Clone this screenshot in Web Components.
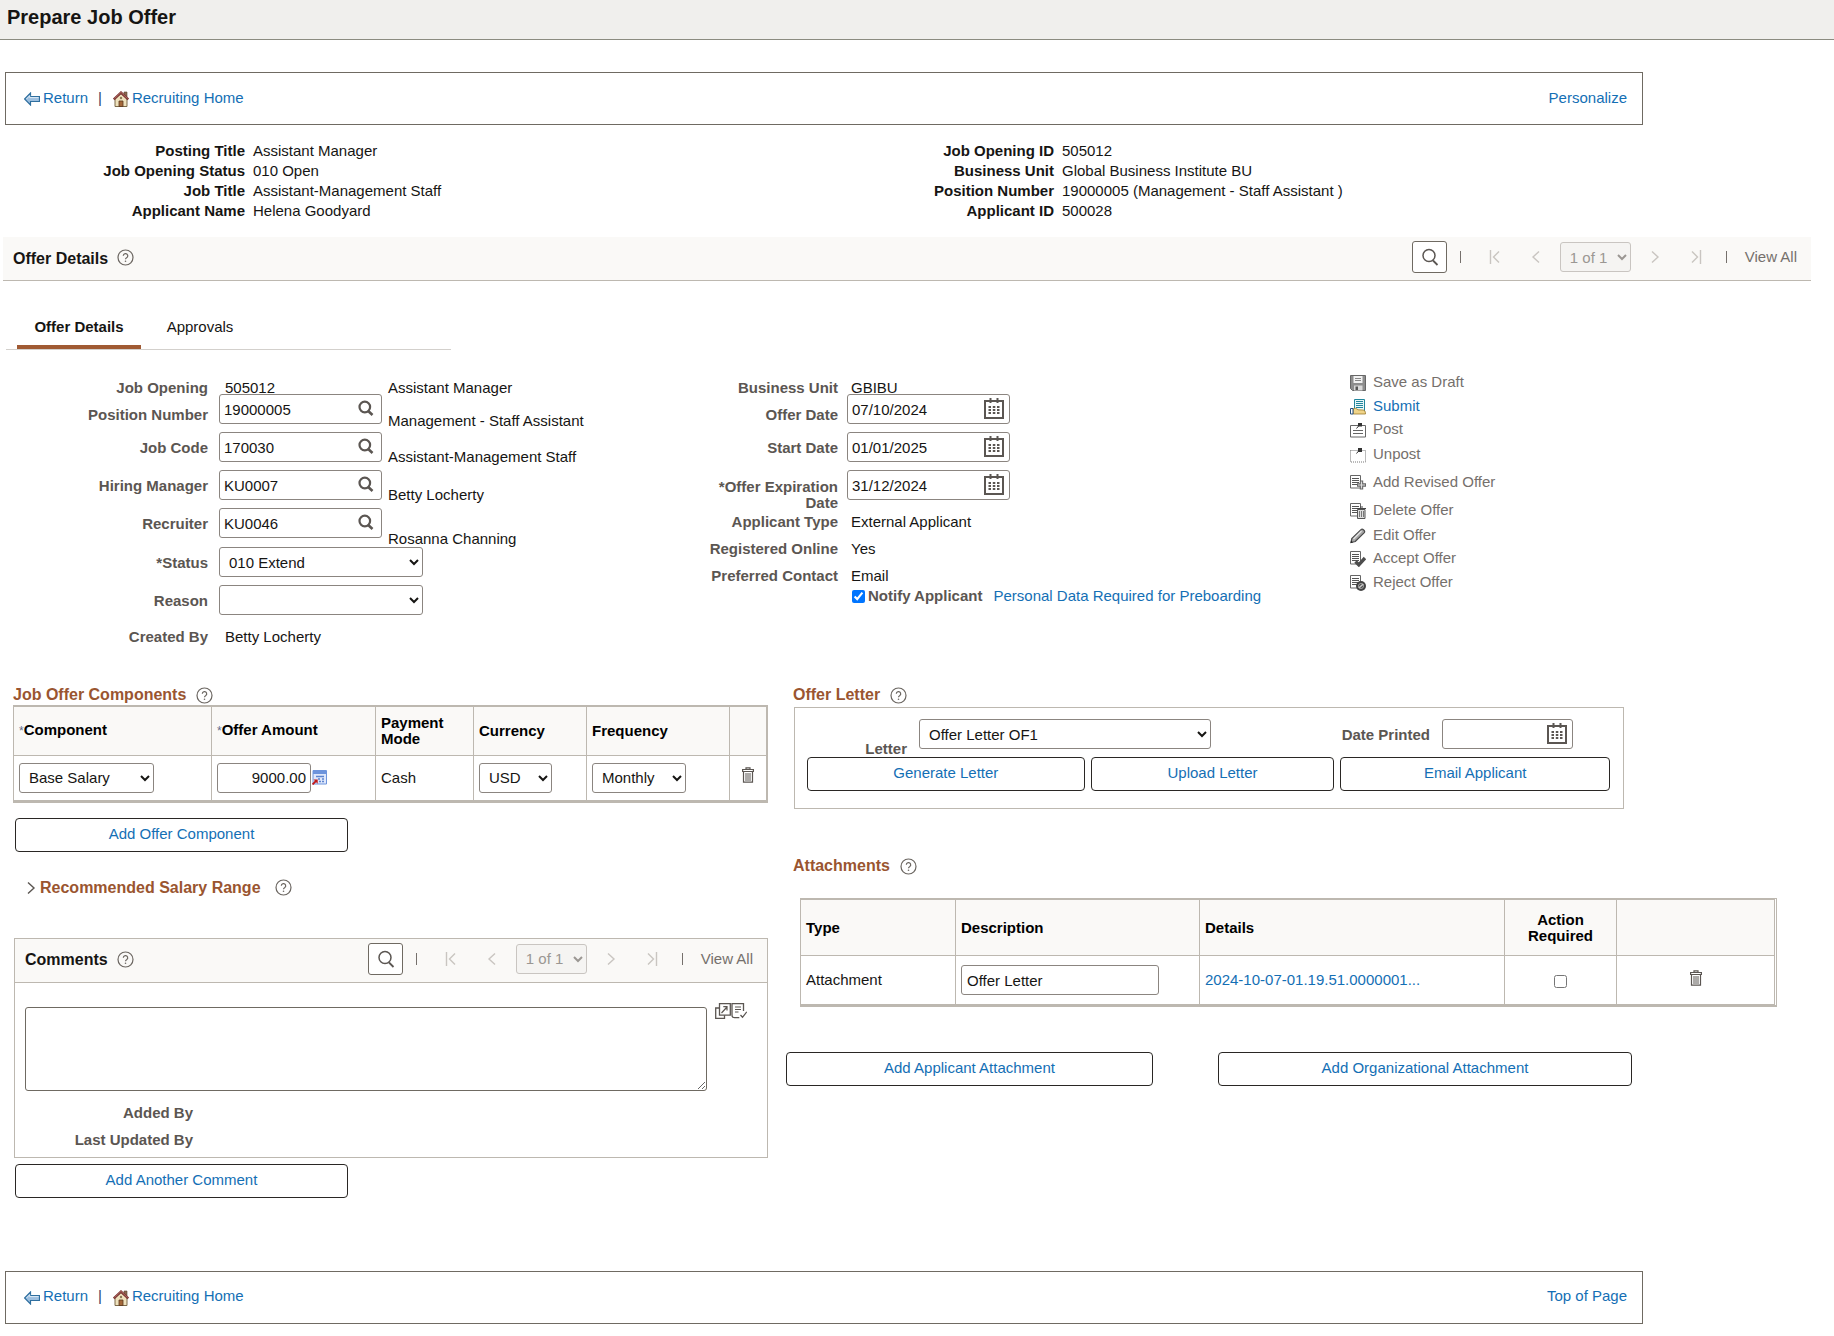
<!DOCTYPE html>
<html lang="en">
<head>
<meta charset="utf-8">
<title>Prepare Job Offer</title>
<style>
  html, body { margin: 0; background: #fff; }
  body { font-family: "Liberation Sans", Arial, sans-serif; font-size: 15px; line-height: 20px; color: #161513; }
</style>
</head>
<body>
<job-offer-page></job-offer-page>
<script>
const BASE = `
  *, *::before, *::after { box-sizing: border-box; }
  :host { display: block; }
  :host([hidden]) { display: none; }
  h1, h2, h3, p, dl, dd, ul { margin: 0; padding: 0; }
  a { color: #146fb5; text-decoration: none; }
  button, input, select, textarea { font: inherit; color: inherit; margin: 0; }
  button { background: none; border: 0; padding: 0; cursor: pointer; display: inline-flex; align-items: center; justify-content: center; }
  input:not([type=checkbox]), select, textarea { background: #fff; border: 1px solid #8b8580; border-radius: 3px; }
  select { height: 30px; padding: 0 5px; color: #161513; }
  input.text { height: 30px; padding: 0 5px; }
  input[type=checkbox] { width: 13px; height: 13px; }
  .lbl { font-weight: 700; color: #5b5652; }
  h3 { font-size: 16px; line-height: 20px; color: #9a5530; }
  .field { display: inline-flex; align-items: center; height: 30px; border: 1px solid #8b8580; border-radius: 3px; background: #fff; padding: 0 4px; }
  .field button { padding: 0 1px 2px 0; }
  .field input:not([type=checkbox]) { border: 0; padding: 0; min-width: 0; width: 0; flex: 1; height: 26px; background: transparent; outline: 0; }
`;
function define(name, css, html, setup) {
  const tpl = document.createElement('template');
  tpl.innerHTML = `<style>${BASE}${css}</style>${html}`;
  customElements.define(name, class extends HTMLElement {
    connectedCallback() {
      if (this.shadowRoot) return;
      this.attachShadow({ mode: 'open' }).append(tpl.content.cloneNode(true));
      if (setup) setup(this, this.shadowRoot);
    }
  });
}

/* ---------- icons ---------- */
const DOC = '<path d="M.5.5h10v12.500H.5z" fill="#fff" stroke="#666"/><path d="M2 3.500h7M2 5.500h7M2 7.500h7M2 9.500h7" stroke="#555"/>';
const ICONS = {
  back: [16, 14, '<path d="M.6 7 6.5 1v3.500h9v5h-9V13L.6 7z" fill="#9dbfdf" stroke="#2f6f9f" stroke-width="1.200"/><path d="M2.500 7l3.200-3.300v1.900h8.800" fill="none" stroke="#dceaf6"/>'],
  home: [16, 16, '<path d="M11 1h3v5h-3z" fill="#8a6a50" stroke="#5c4534" stroke-width=".6"/><path d="M2 7.500 8 2.5l6 5V15.500H2z" fill="#efe2bd" stroke="#7c6a4a"/><path d="M.8 8.500 8 1.600l7.200 6.900" fill="none" stroke="#7c3634" stroke-width="2.400"/><path d="M1.500 7.500 8 1.300l6.500 6.200" fill="none" stroke="#c07a70" stroke-width=".7"/><path d="M6 15.500V10h4v5.500z" fill="#a5683a" stroke="#5b3a20" stroke-width=".8"/><circle cx="8" cy="7" r="1.200" fill="#8b7a5a"/>'],
  help: [17, 17, '<circle cx="8.500" cy="8.500" r="7.500" fill="none" stroke="#6b6661" stroke-width="1.200"/><path d="M6.300 6.800a2.200 2.200 0 1 1 3.300 1.900c-.7.400-1.100.7-1.100 1.500" fill="none" stroke="#6b6661" stroke-width="1.200"/><circle cx="8.500" cy="12.200" r=".8" fill="#6b6661"/>'],
  search: [16, 16, '<circle cx="6.800" cy="7" r="5.300" fill="none" stroke="#5b5652" stroke-width="2.200"/><path d="m10.200 11 4.300 4" stroke="#5b5652" stroke-width="2.600"/>'],
  find: [18, 18, '<circle cx="8" cy="7.500" r="6" fill="none" stroke="#5b5652" stroke-width="1.500"/><path d="m12 12.500 4.500 4.500" stroke="#5b5652" stroke-width="1.800"/>'],
  cal: [20, 22, '<path d="M1 4h18v17H1z" fill="none" stroke="#5b5652" stroke-width="2"/><path d="M6.500 1v5M13.500 1v5" stroke="#5b5652" stroke-width="2"/><path d="M4.500 10h2.500M8.800 10h2.500M13 10h2.500M4.500 13h2.500M8.800 13h2.500M13 13h2.500M4.500 16h2.500M8.800 16h2.500M13 16h2.500" stroke="#5b5652" stroke-width="1.800"/>'],
  first: [12, 14, '<path d="M1.500 0v14M10 1.500 4.500 7l5.500 5.500" fill="none" stroke="#c9c5c1" stroke-width="1.400"/>'],
  prev: [12, 14, '<path d="M9 1.500 3 7l6 5.500" fill="none" stroke="#c9c5c1" stroke-width="1.400"/>'],
  next: [12, 14, '<path d="M3 1.500 9 7l-6 5.500" fill="none" stroke="#c9c5c1" stroke-width="1.400"/>'],
  last: [12, 14, '<path d="M10.500 0v14M2 1.500 7.500 7 2 12.500" fill="none" stroke="#c9c5c1" stroke-width="1.400"/>'],
  expand: [9, 14, '<path d="m1 1.500 6 5.500-6 5.500" fill="none" stroke="#5b5652" stroke-width="1.400"/>'],
  trash: [12, 16, '<path d="M4 2V.8h4V2M.6 2.500h10.800v2H.6zM1.500 4.500h9v10.700h-9z" fill="none" stroke="#5b5652" stroke-width="1.200"/><path d="M4 6v8M6 6v8M8 6v8" stroke="#5b5652"/>'],
  convert: [15, 15, '<path d="M1 .5h13.500v13.500H1z" fill="#dfe8fb" stroke="#6d94dc"/><path d="M1 1h13v3H1z" fill="#6d94dc"/><path d="M4 6.500h8M6 9h2M10 9h2M7 11.500h2M10 11.500h2" stroke="#5d84cf" stroke-width="1.400"/><path d="M.5 14.500 4.500 10.500" stroke="#c01818" stroke-width="1.800"/><path d="M1.500 9.500h4.200v4.200z" fill="#c01818"/>'],
  save: [16, 16, '<path d="M.5.5h15v15h-13l-2-2z" fill="#8d8d8d" stroke="#666"/><path d="M3.500 1h9v7h-9z" fill="#f2f2f2"/><path d="M5 3.500h6M5 5.500h6" stroke="#888"/><path d="M4 10.500h8.500v5H4z" fill="#d9d9d9"/><path d="M5.500 11.500h2.500v3.500H5.500z" fill="#555"/>'],
  submit: [16, 16, '<path d="M4.500.5h10v12h-10z" fill="#e9f7fa" stroke="#23869c"/><path d="M6 2.500h7M6 4.500h7M6 6.500h7M6 8.500h7" stroke="#23869c"/><path d="M3 10c2-1.500 3.500-.5 5 .8l5 .2c1.500.1 2.500 1 2.500 4H3z" fill="#f0d489" stroke="#9a7a2c" stroke-width=".8"/><path d="M.5 9.500h2.500v5.500H.5z" fill="#fff" stroke="#27507f"/>'],
  post: [16, 16, '<path d="M.5 3.500h15v11.500H.5z" fill="#fff" stroke="#666"/><path d="M3 8.500h10M3 11.500h10" stroke="#666"/><path d="m6.500 6.500 2.500-3" stroke="#333"/><path d="M8 1h4v3.500H8z" fill="#333"/>'],
  unpost: [16, 16, '<path d="M.5 3.500h15v11.500H.5z" fill="none" stroke="#777" stroke-dasharray="1 1"/><path d="m6.500 6.500 2.500-3" stroke="#333"/><path d="M8 1h4v4H8z" fill="#333"/>'],
  add: [16, 16, DOC + '<path d="M11.500 5.500v9M7 10h9" stroke="#666" stroke-width="3.400"/><path d="M11.500 6.500v7M8 10h7" stroke="#ddd" stroke-width="1.200"/>'],
  del: [16, 16, DOC + '<path d="M7.500 6.500h7.500v9H7.500z" fill="#ddd" stroke="#555"/><path d="M6.500 5.500h9.500M10 4h3" stroke="#444"/><path d="M9.500 8v6M11.500 8v6M13.500 8v6" stroke="#777"/>'],
  edit: [16, 16, '<path d="m1 14.500.8-4L11 1.600c1.500-1.300 4.600 1.300 3.300 3L5.300 13.500z" fill="#a5a5a5" stroke="#4a4a4a" stroke-width="1.200"/><path d="m3.500 11 8-8" stroke="#e2e2e2" stroke-width="1.400"/><path d="M.6 15l.4-2.500 2 2z" fill="#222"/>'],
  accept: [16, 16, DOC + '<path d="m5.500 10.500 3.300 3.300L15 7" fill="none" stroke="#4d4d4d" stroke-width="3.400"/>'],
  reject: [16, 16, DOC + '<circle cx="11" cy="11" r="5" fill="#444"/><path d="m8.800 13 4.500-4" stroke="#ccc" stroke-width="1.600"/><circle cx="11" cy="11" r="2.500" fill="none" stroke="#bbb" stroke-width=".8"/>'],
  popup: [16, 16, '<path d="M4.500.7h10.800v11.500H4.500z" fill="none" stroke="#5b5652" stroke-width="1.300"/><path d="M4.500 5H.7v10.300h8.800v-3" fill="none" stroke="#5b5652" stroke-width="1.300"/><path d="m6.500 10 5.500-6M8.300 3.700H12v3.800" fill="none" stroke="#5b5652" stroke-width="1.200"/>'],
  spell: [16, 16, '<path d="M12.500 8V.7H1v11.500c0 2 1 2.500 2.500 2.500h4.800" fill="none" stroke="#5b5652" stroke-width="1.300"/><path d="M4 4h6M4 6.500h6M4 9h3.500" stroke="#5b5652" stroke-width="1.200"/><path d="m9.500 12 2 2.300 4.300-5.500" fill="none" stroke="#5b5652" stroke-width="1.300"/>']
};
define('pt-icon', ':host{display:inline-flex;flex:none} svg{display:block}', '<span></span>', (el, root) => {
  const [w, h, body] = ICONS[el.getAttribute('name')];
  root.querySelector('span').innerHTML = `<svg width="${w}" height="${h}" viewBox="0 0 ${w} ${h}" aria-hidden="true">${body}</svg>`;
});

/* ---------- shared parts ---------- */
define('pt-help', ':host{display:inline-flex}', '<button type="button" aria-label="Help"><pt-icon name="help"></pt-icon></button>');

define('pt-button', `
  button { width: 100%; height: 34px; padding-bottom: 2px; border: 1px solid #2a2724; border-radius: 4px; background: #fff; color: #146fb5; }
`, '<button type="button"><slot></slot></button>');

define('pt-header', `
  :host { background: #f0efed; border-bottom: 1px solid #8b8b80; }
  h1 { font-size: 20px; line-height: 24px; padding: 5px 7px 10px; }
`, '<h1><slot></slot></h1>');

define('pt-nav-box', `
  nav { display: flex; align-items: center; height: 53px; padding: 0 15px 2px 18px; border: 1px solid #6f6a62; }
  .end { margin-left: auto; }
  a { display: inline-flex; align-items: center; gap: 3px; }
  pt-icon { padding-top: 3px; }
  .sep { padding: 0 11px 0 10px; color: #2b3b66; }
`, `<nav>
    <a href="#return"><pt-icon name="back"></pt-icon>Return</a>
    <span class="sep">|</span>
    <a href="#home"><pt-icon name="home"></pt-icon>Recruiting Home</a>
    <span class="end"><slot></slot></span>
  </nav>`);

define('pt-pager', `
  :host { display: flex; align-items: center; color: #75706c; }
  .find { width: 35px; height: 32px; border: 1px solid #6f6a62; border-radius: 3px; background: #fff; }
  .bar { width: 1px; height: 12px; background: #75706c; }
  .group { display: flex; align-items: center; flex: 1; justify-content: space-between; padding: 0 24px 0 28px; }
  .pair { display: flex; gap: 29px; }
  .find + .bar { margin-left: 13px; }
  .all { margin-left: 18px; color: #75706c; }
  select { width: 71px; background: #f5f4f2; border-color: #c9c5c1; color: #9b9793; opacity: 1; }
`, `<button class="find" type="button" aria-label="Find"><pt-icon name="find"></pt-icon></button>
    <span class="bar"></span>
    <div class="group">
      <span class="pair"><button type="button" aria-label="First"><pt-icon name="first"></pt-icon></button>
      <button type="button" aria-label="Previous"><pt-icon name="prev"></pt-icon></button></span>
      <select aria-label="Row" disabled><option>1 of 1</option></select>
      <span class="pair"><button type="button" aria-label="Next"><pt-icon name="next"></pt-icon></button>
      <button type="button" aria-label="Last"><pt-icon name="last"></pt-icon></button></span>
    </div>
    <span class="bar"></span>
    <a class="all" href="#all">View All</a>`);

define('pt-section-bar', `
  :host { display: flex; align-items: center; height: 44px; padding: 0 14px 0 10px; background: #faf9f7; border-bottom: 1px solid #bdb8b0; }
  h2 { font-size: 16px; line-height: 20px; }
  pt-help { margin-left: 9px; padding-bottom: 2px; }
  pt-pager { margin-left: auto; width: 385px; padding-bottom: 3px; }
`, '<h2><slot></slot></h2><pt-help></pt-help><pt-pager></pt-pager>');

define('pt-facts', `
  :host { display: grid; grid-template-columns: 1fr 1fr; }
  dl { display: grid; grid-template-columns: 245px 1fr; column-gap: 8px; }
  dl + dl { grid-template-columns: 137px 1fr; }
  dt { font-weight: 700; text-align: right; white-space: nowrap; }
`, `<dl>
      <dt>Posting Title</dt><dd>Assistant Manager</dd>
      <dt>Job Opening Status</dt><dd>010 Open</dd>
      <dt>Job Title</dt><dd>Assistant-Management Staff</dd>
      <dt>Applicant Name</dt><dd>Helena Goodyard</dd>
    </dl>
    <dl>
      <dt>Job Opening ID</dt><dd>505012</dd>
      <dt>Business Unit</dt><dd>Global Business Institute BU</dd>
      <dt>Position Number</dt><dd>19000005 (Management - Staff Assistant )</dd>
      <dt>Applicant ID</dt><dd>500028</dd>
    </dl>`);

define('pt-tabs', `
  :host { width: 445px; border-bottom: 1px solid #d3d0cc; }
  div { display: flex; padding-left: 11px; }
  button { height: 45px; width: 118px; padding-top: 4px; border-bottom: 4px solid transparent; }
  button.on { width: 124px; font-weight: 700; border-color: #a05a33; }
`, `<div role="tablist"><button class="on" role="tab" type="button" aria-selected="true">Offer Details</button><button role="tab" type="button">Approvals</button></div>`);

/* ---------- offer form ---------- */
define('offer-form', `
  :host { display: flex; padding-top: 8px; }
  .main { width: 614px; flex: none; }
  .dates { flex: 1; }
  .row { display: grid; height: 38px; align-items: start; }
  .main .row { grid-template-columns: 205px 163px 1fr; }
  .main .row > * { min-width: 0; }
  .dates .row { grid-template-columns: 221px 1fr; }
  .row.top { height: 16px; }
  .row.fact { height: 27px; line-height: 27px; }
  .row.tick, .row.tick .lbl { height: 14px; line-height: 14px; }
  .lbl { text-align: right; }
  .field-row > .lbl { line-height: 32px; }
  .field-row.low > .lbl { padding-top: 11px; line-height: 20px; }
  .field-row.two > .lbl { padding: 9px 0 0 80px; line-height: 16px; }
  .ctl { margin-left: 11px; }
  .val { padding-left: 17px; }
  .dates .ctl { margin-left: 9px; }
  .dates .val { padding-left: 13px; }
  .field { width: 163px; }
  .main .field button { padding-right: 3px; }
  .field-row select { width: 204px; }
  .desc { padding-left: 17px; white-space: nowrap; }
  .field-row .desc { padding-top: 15px; }
  .field-row.low .desc { padding-top: 17px; }
  .field-row.sunk { height: 39px; }
  .field-row.sunk .desc { padding-top: 21px; }
  .tick .ctl { display: flex; align-items: center; padding-left: 5px; }
  .tick input { margin-right: 3px; }
  .tick a { margin-left: 11px; }
`, `<div class="main">
      <div class="row top"><span class="lbl">Job Opening</span><span class="val">505012</span><span class="desc">Assistant Manager</span></div>
      <div class="row field-row low"><label class="lbl" for="pn">Position Number</label><span class="ctl field"><input id="pn" value="19000005"><button type="button" aria-label="Look up"><pt-icon name="search"></pt-icon></button></span><span class="desc">Management - Staff Assistant</span></div>
      <div class="row field-row"><label class="lbl" for="jc">Job Code</label><span class="ctl field"><input id="jc" value="170030"><button type="button" aria-label="Look up"><pt-icon name="search"></pt-icon></button></span><span class="desc">Assistant-Management Staff</span></div>
      <div class="row field-row"><label class="lbl" for="hm">Hiring Manager</label><span class="ctl field"><input id="hm" value="KU0007"><button type="button" aria-label="Look up"><pt-icon name="search"></pt-icon></button></span><span class="desc">Betty Locherty</span></div>
      <div class="row field-row sunk"><label class="lbl" for="rc">Recruiter</label><span class="ctl field"><input id="rc" value="KU0046"><button type="button" aria-label="Look up"><pt-icon name="search"></pt-icon></button></span><span class="desc">Rosanna Channing</span></div>
      <div class="row field-row"><label class="lbl" for="st">*Status</label><select class="ctl" id="st"><option>010 Extend</option></select></div>
      <div class="row field-row"><label class="lbl" for="rs">Reason</label><select class="ctl" id="rs"><option></option></select></div>
      <div class="row fact"><span class="lbl">Created By</span><span class="val">Betty Locherty</span></div>
    </div>
    <div class="dates">
      <div class="row top"><span class="lbl">Business Unit</span><span class="val">GBIBU</span></div>
      <div class="row field-row low"><label class="lbl" for="od">Offer Date</label><span class="ctl field"><input id="od" value="07/10/2024"><button type="button" aria-label="Calendar"><pt-icon name="cal"></pt-icon></button></span></div>
      <div class="row field-row"><label class="lbl" for="sd">Start Date</label><span class="ctl field"><input id="sd" value="01/01/2025"><button type="button" aria-label="Calendar"><pt-icon name="cal"></pt-icon></button></span></div>
      <div class="row field-row two"><label class="lbl" for="ed">*Offer Expiration Date</label><span class="ctl field"><input id="ed" value="31/12/2024"><button type="button" aria-label="Calendar"><pt-icon name="cal"></pt-icon></button></span></div>
      <div class="row fact"><span class="lbl">Applicant Type</span><span class="val">External Applicant</span></div>
      <div class="row fact"><span class="lbl">Registered Online</span><span class="val">Yes</span></div>
      <div class="row fact"><span class="lbl">Preferred Contact</span><span class="val">Email</span></div>
      <div class="row tick"><span></span><span class="ctl"><input type="checkbox" id="na" checked><label class="lbl" for="na">Notify Applicant</label><a href="#personal-data">Personal Data Required for Preboarding</a></span></div>
    </div>`);

define('offer-action', `
  :host { display: flex; height: 24px; }
  :host([fit=tight]) { height: 22px; }
  :host([fit=loose]) { height: 28px; }
  button { gap: 7px; color: #75706c; }
  :host([active]) button { color: #146fb5; }
  pt-icon { padding-top: 2px; }
`, '<button type="button"><span></span><slot></slot></button>', (el, root) => {
  const icon = document.createElement('pt-icon');
  icon.setAttribute('name', el.getAttribute('icon'));
  root.querySelector('span').replaceWith(icon);
});

define('offer-actions', '', `
  <offer-action icon="save">Save as Draft</offer-action>
  <offer-action icon="submit" active>Submit</offer-action>
  <offer-action icon="post" fit="tight">Post</offer-action>
  <offer-action icon="unpost" fit="loose">Unpost</offer-action>
  <offer-action icon="add" fit="loose">Add Revised Offer</offer-action>
  <offer-action icon="del" fit="loose">Delete Offer</offer-action>
  <offer-action icon="edit" fit="tight">Edit Offer</offer-action>
  <offer-action icon="accept">Accept Offer</offer-action>
  <offer-action icon="reject">Reject Offer</offer-action>`);

/* ---------- tables ---------- */
const TABLE = `
  table { width: 100%; border-collapse: collapse; table-layout: fixed; border: 1px solid #bdb8b0; border-width: 2px 2px 3px 1px; }
  th, td { border: 1px solid #bdb8b0; padding: 0 5px; text-align: left; }
  th { background: #faf9f7; color: #000; line-height: 16px; }
  td > * { vertical-align: middle; }
  td > button { padding-bottom: 5px; }
  .mid { text-align: center; }
`;
define('job-components', TABLE + `
  th { height: 49px; } td { height: 46px; }
  .head { display: flex; align-items: center; gap: 10px; height: 20px; }
  pt-button { width: 333px; margin: 15px 0 0 2px; }
  input.text { width: 94px; text-align: right; padding: 0 4px; }
  .amount { display: flex; align-items: center; gap: 1px; }
  .req { font-size: 12px; color: #5f6b8a; font-weight: 400; }
`, `<div class="head"><h3>Job Offer Components</h3><pt-help></pt-help></div>
    <table>
      <colgroup><col style="width:198px"><col style="width:164px"><col style="width:98px"><col style="width:113px"><col><col style="width:38px"></colgroup>
      <thead><tr><th><span class="req">*</span>Component</th><th><span class="req">*</span>Offer Amount</th><th>Payment Mode</th><th>Currency</th><th>Frequency</th><th aria-label="Delete"></th></tr></thead>
      <tbody><tr>
        <td><select aria-label="Component" style="width:135px"><option>Base Salary</option></select></td>
        <td><span class="amount"><input class="text" aria-label="Offer Amount" value="9000.00"><button type="button" aria-label="Convert currency"><pt-icon name="convert"></pt-icon></button></span></td>
        <td>Cash</td>
        <td><select aria-label="Currency" style="width:73px"><option>USD</option></select></td>
        <td><select aria-label="Frequency" style="width:94px"><option>Monthly</option></select></td>
        <td class="mid"><button type="button" aria-label="Delete row"><pt-icon name="trash"></pt-icon></button></td>
      </tr></tbody>
    </table>
    <pt-button>Add Offer Component</pt-button>`);

define('salary-range', `
  :host { display: flex; align-items: center; height: 20px; padding-left: 14px; }
  button.open { gap: 4px; }
  pt-help { margin-left: 14px; }
`, `<button class="open" type="button" aria-expanded="false"><pt-icon name="expand"></pt-icon><h3>Recommended Salary Range</h3></button><pt-help></pt-help>`);

define('comments-panel', `
  .box { border: 1px solid #bdb8b0; margin-left: 1px; padding-bottom: 7px; }
  .edit { display: flex; padding: 20px 20px 0 10px; gap: 8px; }
  textarea { display: block; flex: 1; height: 84px; margin-top: 4px; border-color: #6f6a62; resize: both; }
  .tools { display: flex; height: 16px; }
  .meta { display: grid; grid-template-columns: 178px; row-gap: 7px; padding-top: 12px; text-align: right; }
  pt-button { width: 333px; margin: 6px 0 0 2px; }
`, `<div class="box">
      <pt-section-bar>Comments</pt-section-bar>
      <div class="edit">
        <textarea aria-label="Comment"></textarea>
        <div class="tools"><button type="button" aria-label="Open in window"><pt-icon name="popup"></pt-icon></button><button type="button" aria-label="Spell check"><pt-icon name="spell"></pt-icon></button></div>
      </div>
      <div class="meta"><span class="lbl">Added By</span><span class="lbl">Last Updated By</span></div>
    </div>
    <pt-button>Add Another Comment</pt-button>`);

define('offer-letter', `
  .head { display: flex; align-items: center; gap: 10px; height: 20px; padding-left: 7px; }
  .box { margin: 2px 153px 0 8px; border: 1px solid #bdb8b0; padding: 11px 13px 17px 12px; }
  .fields { display: flex; height: 38px; }
  .letter { width: 100px; text-align: right; line-height: 20px; padding-top: 20px; }
  select { width: 292px; margin-left: 12px; }
  .printed { margin-left: auto; padding-right: 12px; line-height: 32px; }
  .field { width: 131px; margin-right: 37px; }
  .buttons { display: grid; grid-template-columns: 278fr 244fr 270fr; gap: 6px; }
`, `<div class="head"><h3>Offer Letter</h3><pt-help></pt-help></div>
    <div class="box">
      <div class="fields">
        <label class="lbl letter" for="lt">Letter</label>
        <select id="lt"><option>Offer Letter OF1</option></select>
        <label class="lbl printed" for="dp">Date Printed</label>
        <span class="field"><input id="dp" value=""><button type="button" aria-label="Calendar"><pt-icon name="cal"></pt-icon></button></span>
      </div>
      <div class="buttons"><pt-button>Generate Letter</pt-button><pt-button>Upload Letter</pt-button><pt-button>Email Applicant</pt-button></div>
    </div>`);

define('attachments-panel', TABLE + `
  .head { display: flex; align-items: center; gap: 10px; height: 20px; padding-left: 7px; }
  .grid { margin: 22px 0 0 14px; padding-right: 1px; border: solid #bdb8b0; border-width: 1px 1px 2px 0; }
  table { border-width: 1px; }
  th { height: 56px; } td { height: 49px; }
  th.mid { text-align: center; padding: 0 20px; }
  input.text { width: 198px; }
  .buttons { display: flex; gap: 65px; margin-top: 45px; }
  .buttons pt-button:first-child { width: 367px; }
  .buttons pt-button { width: 414px; }
`, `<div class="head"><h3>Attachments</h3><pt-help></pt-help></div>
    <div class="grid"><table>
      <colgroup><col style="width:155px"><col style="width:244px"><col><col style="width:112px"><col style="width:158px"></colgroup>
      <thead><tr><th>Type</th><th>Description</th><th>Details</th><th class="mid">Action Required</th><th aria-label="Delete"></th></tr></thead>
      <tbody><tr>
        <td>Attachment</td>
        <td><input class="text" aria-label="Description" value="Offer Letter"></td>
        <td><a href="#file">2024-10-07-01.19.51.0000001...</a></td>
        <td class="mid"><input type="checkbox" aria-label="Action Required"></td>
        <td class="mid"><button type="button" aria-label="Delete row"><pt-icon name="trash"></pt-icon></button></td>
      </tr></tbody>
    </table></div>
    <div class="buttons"><pt-button>Add Applicant Attachment</pt-button><pt-button>Add Organizational Attachment</pt-button></div>`);

/* ---------- page ---------- */
define('job-offer-page', `
  pt-nav-box { margin: 32px 191px 0 5px; }
  pt-facts { margin: 16px 0; }
  main > pt-section-bar { margin: 0 23px 0 3px; }
  pt-tabs { margin: 23px 0 20px 6px; }
  .details { display: flex; margin-left: 3px; }
  offer-form { flex: 0 1 1347px; }
  .lower { display: grid; grid-template-columns: 755fr 991fr; gap: 18px; margin: 35px 57px 0 13px; }
  salary-range { margin: 26px 0 40px; }
  attachments-panel { margin-top: 47px; }
  footer pt-nav-box { margin-top: 73px; margin-bottom: 10px; }
`, `<pt-header>Prepare Job Offer</pt-header>
    <main>
      <pt-nav-box><a href="#personalize">Personalize</a></pt-nav-box>
      <pt-facts></pt-facts>
      <pt-section-bar>Offer Details</pt-section-bar>
      <pt-tabs></pt-tabs>
      <div class="details"><offer-form></offer-form><offer-actions></offer-actions></div>
      <div class="lower">
        <div><job-components></job-components><salary-range></salary-range><comments-panel></comments-panel></div>
        <div><offer-letter></offer-letter><attachments-panel></attachments-panel></div>
      </div>
    </main>
    <footer><pt-nav-box><a href="#top">Top of Page</a></pt-nav-box></footer>`);
</script>
</body>
</html>
